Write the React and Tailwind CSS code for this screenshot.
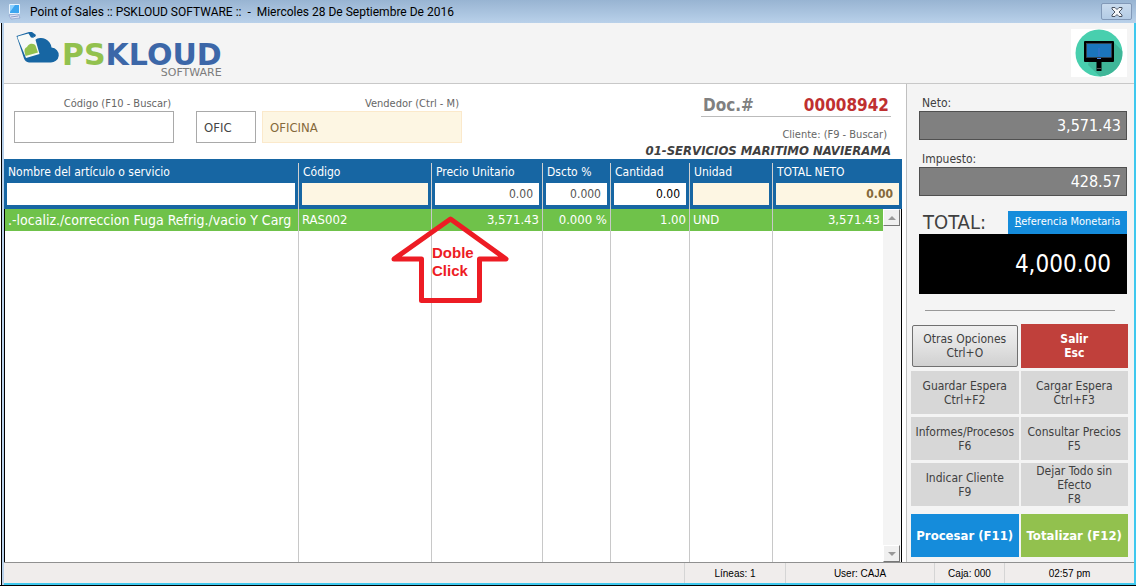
import React, { useState } from "react";

const columns = [
  {
    id: "nombre",
    label: "Nombre del artículo o servicio",
    value: "",
    input: "bg-white text-left text-gray-700",
  },
  {
    id: "codigo",
    label: "Código",
    value: "",
    input: "bg-[#fdf6e3] text-left text-gray-700",
  },
  {
    id: "precio",
    label: "Precio Unitario",
    value: "0.00",
    input: "bg-white text-right text-[#555]",
  },
  {
    id: "descuento",
    label: "Dscto %",
    value: "0.000",
    input: "bg-white text-right text-[#555]",
  },
  {
    id: "cantidad",
    label: "Cantidad",
    value: "0.00",
    input: "bg-white text-right text-black",
  },
  {
    id: "unidad",
    label: "Unidad",
    value: "",
    input: "bg-[#fdf6e3] text-left text-gray-700",
  },
  {
    id: "total",
    label: "TOTAL NETO",
    value: "0.00",
    input: "bg-[#fdf6e3] text-right font-bold text-[#85693a]",
  },
];

const grayButtons = [
  { text: "Guardar Espera", shortcut: "Ctrl+F2" },
  { text: "Cargar Espera", shortcut: "Ctrl+F3" },
  { text: "Informes/Procesos", shortcut: "F6" },
  { text: "Consultar Precios", shortcut: "F5" },
  { text: "Indicar Cliente", shortcut: "F9" },
  { text: "Dejar Todo sin Efecto", shortcut: "F8" },
];

const TitleBar = () => (
  <div className="flex h-[23px] shrink-0 items-center bg-linear-to-b from-[#98b4d2] to-[#b9d1ea] pl-2 font-[Roboto,sans-serif] text-xs text-black">
    <svg width="14" height="16" viewBox="0 0 14 16" className="mr-2">
      <rect x="1" y="0" width="11" height="10" rx="1" fill="#e8f4ff" />
      <path d="M2 1h9v8H2z" fill="#3da5ef" />
      <path d="M2 1h5L2 8z" fill="#8ed1ff" />
      <path d="M1 11l9-1 2 4-9 1z" fill="#dfe5f5" stroke="#7f93c4" strokeWidth=".6" />
      <path d="M3 13l7-1" stroke="#7789bd" strokeWidth=".8" />
    </svg>
    <span className="flex-1 whitespace-pre">
      Point of Sales :: PSKLOUD SOFTWARE ::{"  "}-{"  "}Miercoles 28 De Septiembre De 2016
    </span>
    <button
      type="button"
      aria-label="Cerrar"
      className="mr-1 flex h-[17px] w-[31px] items-center justify-center rounded-[2px] border border-[#8299b8] bg-linear-to-b from-[#c9dbee] to-[#b3cbe5]"
    >
      <svg width="12" height="10" viewBox="0 0 12 10">
        <path
          d="M1 .5h3l2 2 2-2h3v1.500L8 5l3 3v1.500H8l-2-2-2 2H1V8l3-3-3-3z"
          fill="#f4f6f8"
          stroke="#4a5362"
        />
      </svg>
    </button>
  </div>
);

const Logo = () => (
  <div className="flex items-start pl-3">
    <svg width="45" height="36" viewBox="0 0 45 36">
      <path
        d="M.5 7 13 3l2 .5 4 7.500A10.500 10.500 0 0 1 35.500 18.500 8 7.500 0 0 1 34 33.500H13a6 6 0 0 1-5-4z"
        fill="#1766a3"
      />
      <path
        d="M1.500 8.500a1 1 0 0 1 .8-1.200L12.500 4.500l2.500 4 4 .5 4.500 16-13.500 4z"
        fill="#f7faf7"
      />
      <path d="M13 3l3 0 4 3-1 2-4-.5z" fill="#1766a3" />
      <path
        d="M9.500 27l-1-4.500a4.500 4.500 0 0 1 2.500-4.500 5 5 0 0 1 8.500-1.500l2.500 7z"
        fill="#92c14e"
      />
    </svg>
    <div className="mt-[14px] ml-px flex flex-col items-end font-['DejaVu_Sans',sans-serif]">
      <span className="text-3xl leading-6 font-bold text-[#3c67a8]">
        <span className="text-[#92c14e]">PS</span>KLOUD
      </span>
      <span className="text-[11px] leading-[11px] text-[#7c7c7c]">SOFTWARE</span>
    </div>
  </div>
);

const MonitorBadge = () => (
  <svg width="56" height="48" viewBox="0 0 56 48" className="mr-[7px] bg-white">
    <circle cx="28" cy="24" r="23.500" fill="#48cfae" />
    <path d="M43 13.500l8.300 8.500A23.500 23.500 0 0 1 29 47.500L17 36l1-4z" fill="#3fb698" />
    <rect x="13" y="12" width="30" height="21" rx="1" fill="#000" />
    <rect x="15.500" y="14.500" width="25" height="14" fill="#1b75bc" stroke="#4a4a4a" strokeWidth=".6" />
    <path d="M28 19v8" stroke="#3f6fd0" />
    <path d="M26 29.500h4" stroke="#4b86e8" />
    <path d="M25.500 33h5v9h-5z" fill="#000" />
    <path d="M25.500 39.500h5" stroke="#555" />
  </svg>
);

const ClickHere = () => (
  <div className="pointer-events-none absolute top-[6px] left-[-42px] z-10 h-[90px] w-[120px]">
    <svg width="120" height="90" viewBox="0 0 120 90" className="absolute inset-0">
      <path
        d="M60.500 4 116 44H89.500V85.500H31.500V44H4z"
        fill="none"
        stroke="#ed1c24"
        strokeWidth="5"
        strokeLinejoin="round"
      />
    </svg>
    <div className="relative pt-[29px] pl-[42px] text-left font-['Liberation_Sans',sans-serif] text-[15px] leading-[18px] font-bold text-[#ed1c24]">
      Doble
      <br />
      Click
    </div>
  </div>
);

const ArticleTable = () => {
  const [draft, setDraft] = useState(
    Object.fromEntries(columns.map((col) => [col.id, col.value]))
  );

  return (
    <table className="h-full w-full table-fixed border-separate border-spacing-0 text-[13px]">
      <colgroup>
        <col />
        <col className="w-[133px]" />
        <col className="w-[111px]" />
        <col className="w-[68px]" />
        <col className="w-[79px]" />
        <col className="w-[83px]" />
        <col className="w-[110px]" />
        <col className="w-[19px]" />
      </colgroup>
      <thead>
        <tr className="bg-[#1766a3] text-white">
          {columns.map((col, i) => (
            <th
              key={col.id}
              colSpan={i === columns.length - 1 ? 2 : 1}
              className="h-[50px] p-0 pt-1 text-left align-top font-normal"
            >
              <div
                className={`h-[46px] px-[3px] ${
                  i === columns.length - 1 ? "" : "border-r border-[#d0d0d0]"
                }`}
              >
                <label
                  htmlFor={col.id}
                  className="block h-5 truncate pl-px text-xs leading-[18px]"
                >
                  {col.label}
                </label>
                <input
                  id={col.id}
                  value={draft[col.id]}
                  onChange={(e) =>
                    setDraft((prev) => ({ ...prev, [col.id]: e.target.value }))
                  }
                  className={`block h-[22px] w-full px-[6px] text-xs outline-none ${col.input}`}
                />
              </div>
            </th>
          ))}
        </tr>
      </thead>
      <tbody>
        <tr className="bg-[#6fc24a] text-right text-white">
          <td className="h-[22px] overflow-hidden border-r border-l border-r-[#c8c8c8] border-l-black p-0 pl-[3px] text-left text-sm leading-[22px] whitespace-nowrap">
            .-localiz./correccion Fuga Refrig./vacio Y Carg
          </td>
          <td className="border-r border-[#c8c8c8] p-0 pl-[3px] text-left">RAS002</td>
          <td className="relative border-r border-[#c8c8c8] p-0 pr-[3px]">
            3,571.43
            <ClickHere />
          </td>
          <td className="border-r border-[#c8c8c8] p-0 pr-[3px]">0.000 %</td>
          <td className="border-r border-[#c8c8c8] p-0 pr-[3px]">1.00</td>
          <td className="border-r border-[#c8c8c8] p-0 pl-[3px] text-left">UND</td>
          <td className="p-0 pr-[3px]">3,571.43</td>
          <td className="border-r border-black bg-[#f4f4f4] p-0 align-top">
            <button
              type="button"
              aria-label="Subir"
              className="flex h-[17px] w-[17px] items-center justify-center border border-t-white border-r-[#777] border-b-[#777] border-l-white bg-[#f0f0f0]"
            >
              <svg width="8" height="4" viewBox="0 0 8 4">
                <path d="M4 0l4 4H0z" fill="#999" />
              </svg>
            </button>
          </td>
        </tr>
        <tr className="h-full bg-white">
          <td className="border-r border-l border-r-[#c8c8c8] border-l-black" />
          <td className="border-r border-[#c8c8c8]" />
          <td className="border-r border-[#c8c8c8]" />
          <td className="border-r border-[#c8c8c8]" />
          <td className="border-r border-[#c8c8c8]" />
          <td className="border-r border-[#c8c8c8]" />
          <td />
          <td className="border-r border-black bg-[#f4f4f4] p-0 align-bottom">
            <button
              type="button"
              aria-label="Bajar"
              className="flex h-[17px] w-[17px] items-center justify-center border border-t-white border-r-[#777] border-b-[#777] border-l-white bg-[#f0f0f0]"
            >
              <svg width="8" height="4" viewBox="0 0 8 4">
                <path d="M0 0h8L4 4z" fill="#999" />
              </svg>
            </button>
          </td>
        </tr>
      </tbody>
    </table>
  );
};

const DocumentForm = () => {
  const [codigo, setCodigo] = useState("");
  const [vendedor, setVendedor] = useState("OFIC");

  return (
    <div className="flex h-[75px] shrink-0 items-start pl-[10px]">
      <div className="mt-3 w-40">
        <label
          htmlFor="buscar"
          className="block pr-[3px] text-right text-[11px] leading-[15px] text-[#666]"
        >
          Código (F10 - Buscar)
        </label>
        <input
          id="buscar"
          value={codigo}
          onChange={(e) => setCodigo(e.target.value)}
          className="block h-8 w-full border border-[#a9a9a9] bg-white px-2 text-xs outline-none"
        />
      </div>
      <div className="mt-3 ml-[22px] w-[266px]">
        <label
          htmlFor="vendedor"
          className="block pr-[3px] text-right text-[11px] leading-[15px] text-[#666]"
        >
          Vendedor (Ctrl - M)
        </label>
        <div className="flex gap-[6px]">
          <input
            id="vendedor"
            value={vendedor}
            onChange={(e) => setVendedor(e.target.value)}
            className="h-8 w-[60px] border border-[#a9a9a9] bg-white px-[7px] text-[13px] text-[#444] outline-none"
          />
          <input
            aria-label="Nombre del vendedor"
            readOnly
            value="OFICINA"
            className="h-8 w-[200px] border border-[#fbe9cb] bg-[#fdf6e3] px-[7px] text-[13px] text-[#85693a] outline-none"
          />
        </div>
      </div>
      <div className="mt-[10px] mr-[15px] ml-auto text-right">
        <div className="ml-auto flex w-[190px] justify-between border-b border-[#bbb] px-[2px] text-[17px] leading-[22px] font-bold">
          <span className="text-[#808080]">Doc.#</span>
          <span className="text-[#bf3030]">00008942</span>
        </div>
        <div className="mt-[10px] pr-1 text-[11px] leading-4 text-[#666]">
          Cliente: (F9 - Buscar)
        </div>
        <div className="text-[13px] leading-4 font-bold text-[#404040] italic">
          01-SERVICIOS MARITIMO NAVIERAMA
        </div>
      </div>
    </div>
  );
};

const Sidebar = () => (
  <aside className="w-[228px] shrink-0 border-l border-[#c0c0c0] bg-[#f4f4f4] text-[#404040]">
    <div className="pt-[10px] pr-[7px] pl-3">
      <label htmlFor="neto" className="block h-[17px] pl-[3px] text-xs leading-[18px]">
        Neto:
      </label>
      <input
        id="neto"
        readOnly
        value="3,571.43"
        className="block h-[29px] w-full border border-[#505050] bg-[#808080] px-[5px] text-right text-base text-white outline-none"
      />
      <label
        htmlFor="impuesto"
        className="mt-[10px] block h-[17px] pl-[3px] text-xs leading-[18px]"
      >
        Impuesto:
      </label>
      <input
        id="impuesto"
        readOnly
        value="428.57"
        className="block h-[29px] w-full border border-[#505050] bg-[#808080] px-[5px] text-right text-base text-white outline-none"
      />
      <div className="mt-[14px] flex items-center justify-between">
        <label htmlFor="total-pagar" className="pl-1 text-xl leading-6">
          TOTAL:
        </label>
        <button
          type="button"
          className="h-[23px] w-[119px] bg-[#158cdb] text-[11px] whitespace-nowrap text-white"
        >
          <u>R</u>eferencia Monetaria
        </button>
      </div>
      <input
        id="total-pagar"
        readOnly
        value="4,000.00"
        className="block h-[60px] w-full bg-black px-4 text-right text-2xl text-white outline-none"
      />
    </div>
    <hr className="mt-4 mr-[19px] ml-[18px] border-[#999]" />
    <div className="mt-[13px] grid grid-cols-2 gap-x-[2px] gap-y-[3px] pr-[6px] pl-1 text-xs leading-[14px]">
      <button
        type="button"
        className="m-px h-[42px] rounded-[2px] border border-[#707070] bg-linear-to-b from-[#f0f0f0] via-[#e2e2e2] to-[#d0d0d0]"
      >
        Otras Opciones
        <br />
        Ctrl+O
      </button>
      <button type="button" className="h-11 bg-[#c0403b] font-bold text-white">
        Salir
        <br />
        Esc
      </button>
      {grayButtons.map((button) => (
        <button
          key={button.text}
          type="button"
          className="h-[43px] bg-[#d7d7d7] whitespace-normal"
        >
          {button.text}
          <br />
          {button.shortcut}
        </button>
      ))}
    </div>
    <div className="mt-2 grid grid-cols-2 gap-[2px] pr-[6px] pl-1 text-[13px] font-bold whitespace-nowrap text-white">
      <button type="button" className="h-[43px] bg-[#158cdb]">
        Procesar (F11)
      </button>
      <button type="button" className="h-[43px] bg-[#92c14e]">
        Totalizar (F12)
      </button>
    </div>
  </aside>
);

const StatusBar = () => (
  <footer className="flex h-[21px] shrink-0 border-t border-[#909090] bg-[#f0edec] text-center font-['Liberation_Sans',sans-serif] text-[10px] leading-[21px] text-black">
    <div className="flex-1 border-r border-[#d5d5d5]" />
    <div className="w-[101px] border-r border-[#d5d5d5]">Líneas: 1</div>
    <div className="w-[149px] border-r border-[#d5d5d5]">User: CAJA</div>
    <div className="w-[70px] border-r border-[#d5d5d5]">Caja: 000</div>
    <div className="w-[129px]">02:57 pm</div>
  </footer>
);

const App = () => {
  return (
    <div className="flex h-screen flex-col bg-white pb-px font-['DejaVu_Sans_Condensed','DejaVu_Sans',sans-serif]">
      <TitleBar />
      <div className="flex min-h-0 flex-1 border-b border-black">
        <div className="flex w-1 shrink-0 border-r-2 border-l border-r-[#b9d1ea] border-l-white bg-black" />
        <div className="flex min-w-0 flex-1 flex-col border-r-2 border-b-2 border-[#3fc8ee]">
          <header className="flex h-[61px] shrink-0 items-center justify-between border-b border-[#c8c8c8] bg-[#f4f4f4]">
            <Logo />
            <MonitorBadge />
          </header>
          <div className="flex min-h-0 flex-1">
            <main className="flex min-w-0 flex-1 flex-col bg-white">
              <DocumentForm />
              <div className="min-h-0 flex-1 pr-1">
                <ArticleTable />
              </div>
            </main>
            <Sidebar />
          </div>
          <StatusBar />
        </div>
      </div>
    </div>
  );
};

export default App;
